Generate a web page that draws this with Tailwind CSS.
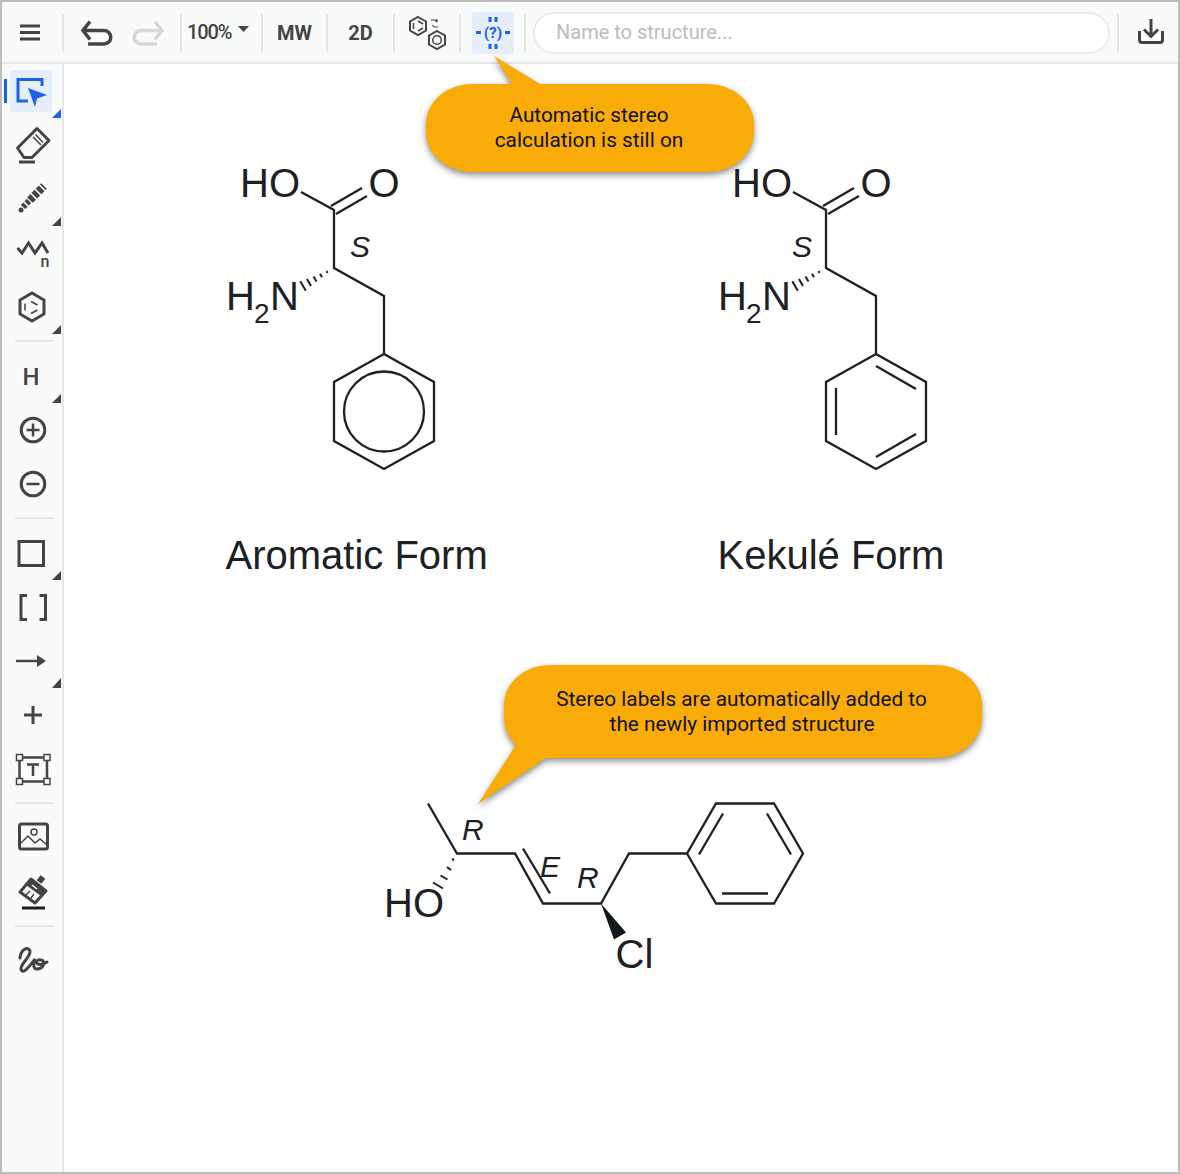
<!DOCTYPE html>
<html>
<head>
<meta charset="utf-8">
<script src="https://cdn.jsdelivr.net/npm/@tailwindcss/browser@4"></script>
</head>
<body class="bg-white">
<div class="relative w-[1180px] h-[1174px] border-2 border-[#bdbdbd] bg-white overflow-hidden flex flex-col font-['Roboto',sans-serif]">
  <!-- top toolbar -->
  <div class="h-[62px] shrink-0 flex items-center bg-[#f9fafa] border-b-2 border-[#e6e8e8] text-[#444]">
    <svg class="w-[60px] h-[60px] shrink-0" viewBox="2 2 60 60" fill="none" stroke="#444" stroke-width="3"><path d="M20 26H40M20 32.500H40M20 39H40"/></svg>
    <div class="w-[2px] h-[38px] mt-[2px] bg-[#e4e6e6] shrink-0"></div>
    <svg class="w-[116px] h-[60px] shrink-0" viewBox="64 2 116 60" fill="none" stroke-width="3.500"><path stroke="#444" d="M90 21.500L83 30.500L90 39.500M84 30.500H104A6.750 6.750 0 0 1 104 44H88"/><path stroke="#d6d8d8" d="M155 21.500L162 30.500L155 39.500M161 30.500H141A6.750 6.750 0 0 0 141 44H157"/></svg>
    <div class="w-[2px] h-[38px] mt-[2px] bg-[#e4e6e6] shrink-0"></div>
    <div class="w-[79px] h-[60px] shrink-0 flex items-center pl-[5px] gap-[7px]">
      <span class="text-[20px] font-medium tracking-[-1.1px]">100%</span>
      <svg class="w-[11px] h-[6px] mb-[6px]" viewBox="0 0 11 6"><path d="M0 0H11L5.500 6Z" fill="#444"/></svg>
    </div>
    <div class="w-[2px] h-[38px] mt-[2px] bg-[#e4e6e6] shrink-0"></div>
    <div class="w-[63px] h-[60px] shrink-0 flex items-center justify-center text-[20px] font-bold pt-[1px]">MW</div>
    <div class="w-[2px] h-[38px] mt-[2px] bg-[#e4e6e6] shrink-0"></div>
    <div class="w-[65px] h-[60px] shrink-0 flex items-center justify-center text-[20px] font-bold pt-[1px]">2D</div>
    <div class="w-[2px] h-[38px] mt-[2px] bg-[#e4e6e6] shrink-0"></div>
    <svg class="w-[64px] h-[60px] shrink-0" viewBox="395 2 64 60" fill="none" stroke="#444"><path stroke-width="2" d="M418 17L426 21.500V30.500L418 35L410 30.500V21.500Z"/><path stroke-width="1.500" d="M413.500 23V29M418 21L423 24M418 31L423 28"/><path stroke-width="2" d="M437 31L445 35.500V44.500L437 49L429 44.500V35.500Z"/><circle cx="437" cy="40" r="4.300" stroke-width="1.500"/><path stroke-width="1.200" d="M431 20H435L437 22M437 22V19M434 27H438M434 27L432.500 25"/></svg>
    <div class="w-[2px] h-[38px] mt-[2px] bg-[#e4e6e6] shrink-0"></div>
    <div class="w-[63px] h-[60px] shrink-0 flex items-center justify-center">
      <div class="relative w-[42px] h-[42px] rounded-[3px] bg-[#e6eefb] ml-[1px] mt-[2px]">
        <svg class="w-[42px] h-[42px]" viewBox="472 12 42 42" fill="none" stroke="#1a62e8" stroke-width="3"><path d="M490 17V22M496 17V22M490 44V49M496 44V49M476 32.500H481M505 32.500H510"/><text x="493" y="38" text-anchor="middle" fill="#1a62e8" stroke="none" font-size="15.500" font-weight="700" font-family="Roboto">(?)</text></svg>
      </div>
    </div>
    <div class="w-[2px] h-[38px] mt-[2px] bg-[#e4e6e6] shrink-0"></div>
    <div class="w-[591px] h-[60px] shrink-0 flex items-center pl-[7px]">
      <div class="w-[577px] h-[42px] mt-[2px] rounded-full bg-white border-2 border-[#ebecec] flex items-center pl-[21px] pb-[2px] text-[20px] text-[#bcbcbc]">Name to structure...</div>
    </div>
    <div class="w-[2px] h-[38px] mt-[2px] bg-[#e4e6e6] shrink-0"></div>
    <svg class="w-[59px] h-[60px] shrink-0" viewBox="1119 2 59 60" fill="none" stroke="#444" stroke-width="3"><path d="M1151 19V36M1144 29.500L1151 36.500L1158 29.500M1139.500 31V40A2.500 2.500 0 0 0 1142 42.500H1160A2.500 2.500 0 0 0 1162.500 40V31"/></svg>
  </div>

  <div class="flex flex-1 min-h-0">
    <!-- left toolbar -->
    <div class="w-[62px] shrink-0 bg-[#f9fafa] border-r-2 border-[#e6e8e8] flex flex-col">
      <svg class="w-[60px] h-[54px]" viewBox="2 0 60 54" fill="none" stroke="#444"><rect x="10" y="6" width="42" height="42" rx="3" fill="#e6eefb" stroke="none"/><rect x="4" y="15" width="3" height="24" fill="#1a62e8" stroke="none"/><path stroke="#1a62e8" stroke-width="3" d="M42 22V15.500H18V37H28"/><path fill="#1a62e8" stroke="none" d="M28 24L47 31L37 34.500L35 43Z"/><path fill="#1a62e8" stroke="none" d="M61 45V54H52Z"/></svg>
      <svg class="w-[60px] h-[54px]" viewBox="2 0 60 54" fill="none" stroke="#444" stroke-width="3"><path d="M37 10.500L49 22.500L32 39.500H24L17.500 30Z" stroke-linejoin="round"/><path stroke-width="1.500" d="M33 19L41 27M35.500 16.500L43 24.500"/><path d="M19 44H35"/></svg>
      <svg class="w-[60px] h-[54px]" viewBox="2 0 60 54" fill="none" stroke="#444"><path stroke-width="8" stroke-dasharray="4.500 1.500" d="M30 28L44 14"/><path stroke-width="6" stroke-dasharray="3.500 1.500" d="M23 35L31 27"/><circle cx="21" cy="38" r="2.500" fill="#444" stroke="none"/><path fill="#444" stroke="none" d="M61 45V54H52Z"/></svg>
      <svg class="w-[60px] h-[54px]" viewBox="2 0 60 54" fill="none" stroke="#444" stroke-width="3"><path d="M17.500 22L22 27L28.500 17L35 27L42 17L48 27"/><text x="40.500" y="41" fill="#444" stroke="none" font-size="16" font-weight="500" font-family="Roboto">n</text></svg>
      <svg class="w-[60px] h-[54px]" viewBox="2 0 60 54" fill="none" stroke="#444" stroke-width="3"><path d="M32 13L44 20V34L32 41L20 34V20Z"/><path stroke-width="1.500" d="M25 23.500V30.500M31 21.500L37.500 25M31 33.500L37.500 30"/><path fill="#444" stroke="none" d="M61 45V54H52Z"/></svg>
      <div class="h-[15px] shrink-0 pt-[6px]"><div class="ml-[13px] w-[39px] h-[2px] bg-[#e4e6e6]"></div></div>
      <svg class="w-[60px] h-[54px]" viewBox="2 0 60 54" fill="none" stroke="#444"><text x="22.500" y="36" fill="#444" stroke="none" font-size="24" font-weight="500" font-family="Roboto">H</text><path fill="#444" stroke="none" d="M61 45V54H52Z"/></svg>
      <svg class="w-[60px] h-[54px]" viewBox="2 0 60 54" fill="none" stroke="#444" stroke-width="3"><circle cx="33" cy="27" r="11.800"/><path stroke-width="2.500" d="M26.500 27H39.500M33 20.500V33.500"/></svg>
      <svg class="w-[60px] h-[54px]" viewBox="2 0 60 54" fill="none" stroke="#444" stroke-width="3"><circle cx="33" cy="27" r="11.800"/><path stroke-width="2.500" d="M26.500 27H39.500"/></svg>
      <div class="h-[15px] shrink-0 pt-[6px]"><div class="ml-[13px] w-[39px] h-[2px] bg-[#e4e6e6]"></div></div>
      <svg class="w-[60px] h-[54px]" viewBox="2 0 60 54" fill="none" stroke="#444" stroke-width="3"><rect x="19" y="15.500" width="24.500" height="24"/><path fill="#444" stroke="none" d="M61 45V54H52Z"/></svg>
      <svg class="w-[60px] h-[54px]" viewBox="2 0 60 54" fill="none" stroke="#444" stroke-width="3"><path d="M27 15.500H21V39.500H27M39.500 15.500H45.500V39.500H39.500"/></svg>
      <svg class="w-[60px] h-[54px]" viewBox="2 0 60 54" fill="none" stroke="#444"><path stroke-width="2.500" d="M16 27H38"/><path fill="#444" stroke="none" d="M37 21L46 27L37 33Z"/><path fill="#444" stroke="none" d="M61 44V54H52Z"/></svg>
      <svg class="w-[60px] h-[54px]" viewBox="2 0 60 54" fill="none" stroke="#444" stroke-width="3"><path d="M24 27H42M33 18V36"/></svg>
      <svg class="w-[60px] h-[54px]" viewBox="2 0 60 54" fill="none" stroke="#444"><rect x="19.500" y="15.500" width="27.500" height="24" stroke-width="2.500"/><path stroke-width="2.500" d="M27 22.500H39M33 22.500V34"/><g fill="#fafafa" stroke-width="1.500"><rect x="16.500" y="12.500" width="6" height="6"/><rect x="44" y="12.500" width="6" height="6"/><rect x="16.500" y="36.500" width="6" height="6"/><rect x="44" y="36.500" width="6" height="6"/></g></svg>
      <div class="h-[15px] shrink-0 pt-[6px]"><div class="ml-[13px] w-[39px] h-[2px] bg-[#e4e6e6]"></div></div>
      <svg class="w-[60px] h-[54px]" viewBox="2 0 60 54" fill="none" stroke="#444"><rect x="19.500" y="13" width="28" height="25" rx="2" stroke-width="3"/><circle cx="34" cy="21" r="3" stroke-width="1.500"/><path stroke-width="1.500" d="M20 33L28 25L35 32L40 28L47 34"/></svg>
      <svg class="w-[60px] h-[54px]" viewBox="2 0 60 54" fill="none" stroke="#444"><path stroke-width="3" d="M20 27L31 14L46 26L35 38Z" stroke-linejoin="round"/><path fill="#444" stroke="none" d="M31 14L46 26L41 31L26 20Z"/><path stroke="#444" stroke-width="6" d="M39 17L43 12"/><path stroke="#f9fafa" stroke-width="1.500" d="M32 20L37 24"/><path stroke-width="1.500" d="M26 30L30 26M31 33L34 29"/><path stroke="#1c1c1c" stroke-width="3" d="M22 43H45"/></svg>
      <div class="h-[15px] shrink-0 pt-[6px]"><div class="ml-[13px] w-[39px] h-[2px] bg-[#e4e6e6]"></div></div>
      <svg class="w-[60px] h-[54px]" viewBox="2 0 60 54" fill="none" stroke="#444" stroke-width="3" stroke-linecap="round"><path d="M20 24C21 15 28 12 30 17C31 23 20 30 21 35C23 42 31 30 35 25C33 30 33 36 38 35C44 34 46 27 41 26C37 25 35 29 38 30C41 31 44 30 47 28"/></svg>
    </div>
    <div class="flex-1 bg-white"></div>
  </div>

  <!-- drawing overlay -->
  <svg class="absolute left-[-2px] top-[-2px] w-[1180px] h-[1174px] pointer-events-none" viewBox="0 0 1180 1174" fill="none">
    <!-- callouts -->
    <g class="drop-shadow-[0_3px_3px_rgba(0,0,0,0.45)]" fill="#f9ab08">
      <path d="M494 56L540 84H708A46 40 0 0 1 754 124V132A46 40 0 0 1 708 172H472A46 40 0 0 1 426 132V124A46 40 0 0 1 472 84H512Z"/>
      <path d="M550 665H936A46 40 0 0 1 982 705V718A46 40 0 0 1 936 758H546L478 804L516 745A46 40 0 0 1 504 718V705A46 40 0 0 1 550 665Z"/>
    </g>
    <g fill="#111" font-family="Roboto" font-size="20.800" text-anchor="middle">
      <text x="589" y="122">Automatic stereo</text>
      <text x="589" y="147">calculation is still on</text>
      <text x="741.500" y="706">Stereo labels are automatically added to</text>
      <text x="742" y="731">the newly imported structure</text>
    </g>

    <!-- molecule 1 -->
    <g stroke="#1c2124" stroke-width="2.300">
      <path d="M301 192L334 210V268L384 296V354L434 382V441L384 469L334 441V382L384 354"/>
      <path d="M331 206L362 188M336 214L367 196"/>
      <circle cx="384" cy="411.500" r="40"/>
      <path stroke-width="2" d="M326.500 271.100L327.500 272.900M320 273.800L322 277.300M313.500 276.400L316.500 281.600M307 279L311 286M300.300 281.200L305.800 290.800"/>
    </g>
    <!-- molecule 2 -->
    <g stroke="#1c2124" stroke-width="2.300">
      <path d="M793 192L826 210V268L876 296V354L926 382V441L876 469L826 441V382L876 354"/>
      <path d="M823 206L854 188M828 214L859 196"/>
      <path d="M836 388V435M876 366L916 389M876 457L916 434"/>
      <path stroke-width="2" d="M818.500 271.100L819.500 272.900M812 273.800L814 277.300M805.500 276.400L808.500 281.600M799 279L803 286M792.300 281.200L797.800 290.800"/>
    </g>
    <!-- molecule 3 -->
    <g stroke="#1c2124" stroke-width="2.300" transform="translate(0 0.500)">
      <path d="M428 803L457 853H515L543 903H601L629 853H687L716 803H774L803 853L774 903H716L687 853"/>
      <path d="M523 848L550 893M723 813L699 854M767 813L791 854M722 893H768"/>
      <path stroke-width="2" d="M452 858.500L454 859.500M447 866.700L451 869.300M440.500 875L447.500 879M433 882L443 888"/>
      <path fill="#14191b" stroke="none" d="M601 903L614 939L626 932Z"/>
    </g>
    <g fill="#1c2124" font-family="Liberation Sans" font-size="40">
      <text x="240" y="197">HO</text>
      <text x="368.500" y="197">O</text>
      <text x="226" y="310">H</text>
      <text x="254" y="323" font-size="28">2</text>
      <text x="270" y="310">N</text>
      <text x="732" y="197">HO</text>
      <text x="860.500" y="197">O</text>
      <text x="718" y="310">H</text>
      <text x="746" y="323" font-size="28">2</text>
      <text x="762" y="310">N</text>
      <text x="384" y="917">HO</text>
      <text x="615.500" y="968">Cl</text>
      <text x="225.500" y="569">Aromatic Form</text>
      <text x="717.500" y="569">Kekulé Form</text>
      <g font-style="italic" font-size="30">
        <text x="350" y="257">S</text>
        <text x="792" y="257">S</text>
        <text x="462" y="840">R</text>
        <text x="540" y="877">E</text>
        <text x="577" y="888">R</text>
      </g>
    </g>
  </svg>
</div>
</body>
</html>
